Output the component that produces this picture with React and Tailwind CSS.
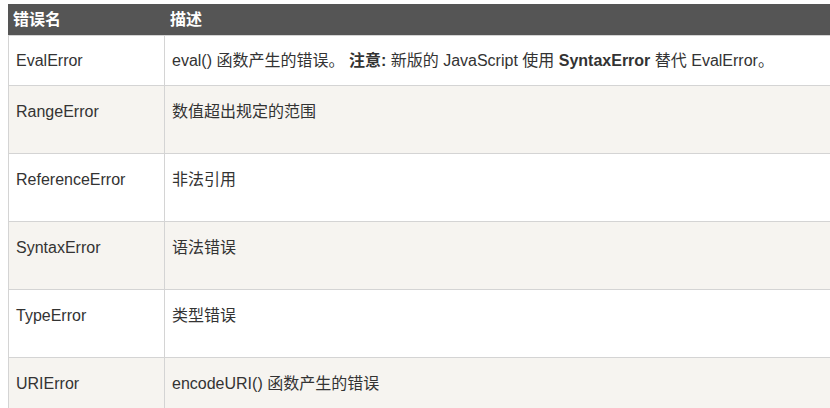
const rows = [
  {
    name: "EvalError",
    desc: (
      <>
        eval() 函数产生的错误。 <b>注意:</b> 新版的 JavaScript 使用 <b>SyntaxError</b> 替代 EvalError。
      </>
    ),
    first: true,
  },
  { name: "RangeError", desc: "数值超出规定的范围" },
  { name: "ReferenceError", desc: "非法引用" },
  { name: "SyntaxError", desc: "语法错误" },
  { name: "TypeError", desc: "类型错误" },
  { name: "URIError", desc: "encodeURI() 函数产生的错误" },
];

export default function App() {
  return (
    <div
      className="w-[830px] h-[408px] overflow-hidden bg-white pl-[8px] pt-[4px] text-[16px] text-[#333]"
      style={{ fontFamily: '"Liberation Sans", "Noto Sans CJK SC", sans-serif' }}
    >
      <div className="w-[860px]">
        {/* header */}
        <div className="flex h-[31px] bg-[#555] text-white font-bold leading-[31px]">
          <div className="w-[156px] pl-[5px]">错误名</div>
          <div className="flex-1 pl-[6px]">描述</div>
        </div>
        {rows.map((r, i) => (
          <div
            key={r.name}
            className={`flex ${r.first ? "h-[50px]" : "h-[68px]"} ${
              i % 2 === 1 ? "bg-[#f6f4f0]" : "bg-white"
            } border-t border-l border-[#d4d4d4] leading-[24px]`}
          >
            <div
              className={`w-[156px] pl-[7px] border-r border-[#d4d4d4] ${
                r.first ? "pt-[13px]" : "pt-[14px]"
              }`}
            >
              {r.name}
            </div>
            <div className={`flex-1 pl-[7px] whitespace-nowrap ${r.first ? "pt-[13px]" : "pt-[14px]"}`}>
              {r.desc}
            </div>
          </div>
        ))}
      </div>
    </div>
  );
}
